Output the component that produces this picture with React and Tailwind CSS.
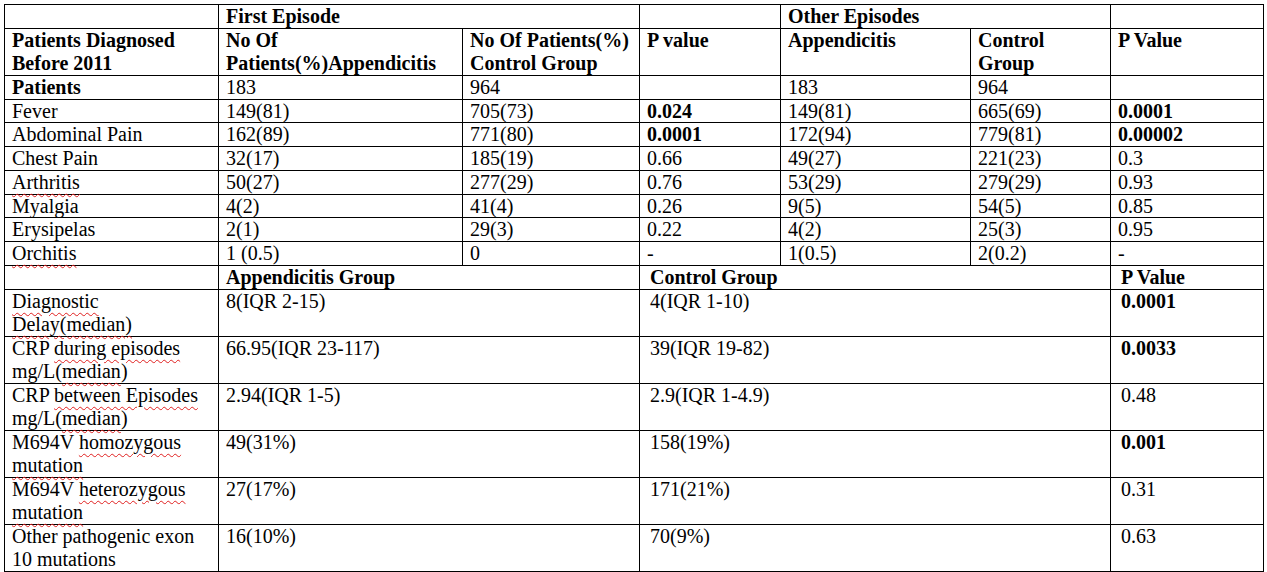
const Sq = ({ children }) => (
  <span className="underline decoration-wavy decoration-[#e02020] decoration-1 underline-offset-[4px]">
    {children}
  </span>
);

const td = "border border-black px-[7px] align-top";

const symptoms = [
  { name: "Fever", a1: "149(81)", c1: "705(73)", p1: "0.024", b1: true, a2: "149(81)", c2: "665(69)", p2: "0.0001", b2: true },
  { name: "Abdominal Pain", a1: "162(89)", c1: "771(80)", p1: "0.0001", b1: true, a2: "172(94)", c2: "779(81)", p2: "0.00002", b2: true },
  { name: "Chest Pain", a1: "32(17)", c1: "185(19)", p1: "0.66", a2: "49(27)", c2: "221(23)", p2: "0.3" },
  { name: <Sq>Arthritis</Sq>, a1: "50(27)", c1: "277(29)", p1: "0.76", a2: "53(29)", c2: "279(29)", p2: "0.93" },
  { name: "Myalgia", a1: "4(2)", c1: "41(4)", p1: "0.26", a2: "9(5)", c2: "54(5)", p2: "0.85" },
  { name: "Erysipelas", a1: "2(1)", c1: "29(3)", p1: "0.22", a2: "4(2)", c2: "25(3)", p2: "0.95" },
  { name: <Sq>Orchitis</Sq>, a1: "1 (0.5)", c1: "0", p1: "-", a2: "1(0.5)", c2: "2(0.2)", p2: "-" },
];

const groups = [
  {
    name: (<><Sq>Diagnostic</Sq><br /><Sq>Delay(median)</Sq></>),
    app: "8(IQR 2-15)", ctl: "4(IQR 1-10)", p: "0.0001", bold: true,
  },
  {
    name: (<>CRP <Sq>during episodes</Sq><br />mg/L(<Sq>median</Sq>)</>),
    app: "66.95(IQR 23-117)", ctl: "39(IQR 19-82)", p: "0.0033", bold: true,
  },
  {
    name: (<>CRP <Sq>between Episodes</Sq><br />mg/L(<Sq>median</Sq>)</>),
    app: "2.94(IQR 1-5)", ctl: "2.9(IQR 1-4.9)", p: "0.48",
  },
  {
    name: (<>M694V <Sq>homozygous</Sq><br /><Sq>mutation</Sq></>),
    app: "49(31%)", ctl: "158(19%)", p: "0.001", bold: true,
  },
  {
    name: (<>M694V <Sq>heterozygous</Sq><br /><Sq>mutation</Sq></>),
    app: "27(17%)", ctl: "171(21%)", p: "0.31",
  },
  {
    name: (<>Other pathogenic exon<br />10 mutations</>),
    app: "16(10%)", ctl: "70(9%)", p: "0.63",
  },
];

export default function App() {
  return (
    <div className="bg-white w-[1267px] h-[572px] pt-[4px] pl-[4px] text-black font-['Liberation_Serif','Times_New_Roman',serif] text-[20px] leading-[22.75px]">
      <table className="border-collapse table-fixed w-[1259px]">
        <colgroup>
          <col className="w-[214px]" />
          <col className="w-[244px]" />
          <col className="w-[177px]" />
          <col className="w-[141px]" />
          <col className="w-[190px]" />
          <col className="w-[140px]" />
          <col className="w-[153px]" />
        </colgroup>
        <tbody>
          <tr className="font-bold">
            <td className={td}></td>
            <td className={td} colSpan={2}>First Episode</td>
            <td className={td}></td>
            <td className={td} colSpan={2}>Other Episodes</td>
            <td className={td}></td>
          </tr>
          <tr className="font-bold leading-[23px]">
            <td className={td}>Patients Diagnosed<br />Before 2011</td>
            <td className={td}>No Of<br />Patients(%)Appendicitis</td>
            <td className={td}>No Of Patients(%)<br />Control Group</td>
            <td className={td}>P value</td>
            <td className={td}>Appendicitis</td>
            <td className={td}>Control<br />Group</td>
            <td className={td}>P Value</td>
          </tr>
          <tr>
            <td className={`${td} font-bold`}>Patients</td>
            <td className={td}>183</td>
            <td className={td}>964</td>
            <td className={td}></td>
            <td className={td}>183</td>
            <td className={td}>964</td>
            <td className={td}></td>
          </tr>
          {symptoms.map((s, i) => (
            <tr key={i}>
              <td className={td}>{s.name}</td>
              <td className={td}>{s.a1}</td>
              <td className={td}>{s.c1}</td>
              <td className={`${td} ${s.b1 ? "font-bold" : ""}`}>{s.p1}</td>
              <td className={td}>{s.a2}</td>
              <td className={td}>{s.c2}</td>
              <td className={`${td} ${s.b2 ? "font-bold" : ""}`}>{s.p2}</td>
            </tr>
          ))}
          <tr className="font-bold">
            <td className={td}></td>
            <td className={td} colSpan={2}>Appendicitis Group</td>
            <td className={`${td} pl-[10px]`} colSpan={3}>Control Group</td>
            <td className={`${td} pl-[10px]`}>P Value</td>
          </tr>
          {groups.map((g, i) => (
            <tr key={i} className="leading-[23px]">
              <td className={td}>{g.name}</td>
              <td className={td} colSpan={2}>{g.app}</td>
              <td className={`${td} pl-[10px]`} colSpan={3}>{g.ctl}</td>
              <td className={`${td} pl-[10px] ${g.bold ? "font-bold" : ""}`}>{g.p}</td>
            </tr>
          ))}
        </tbody>
      </table>
    </div>
  );
}
